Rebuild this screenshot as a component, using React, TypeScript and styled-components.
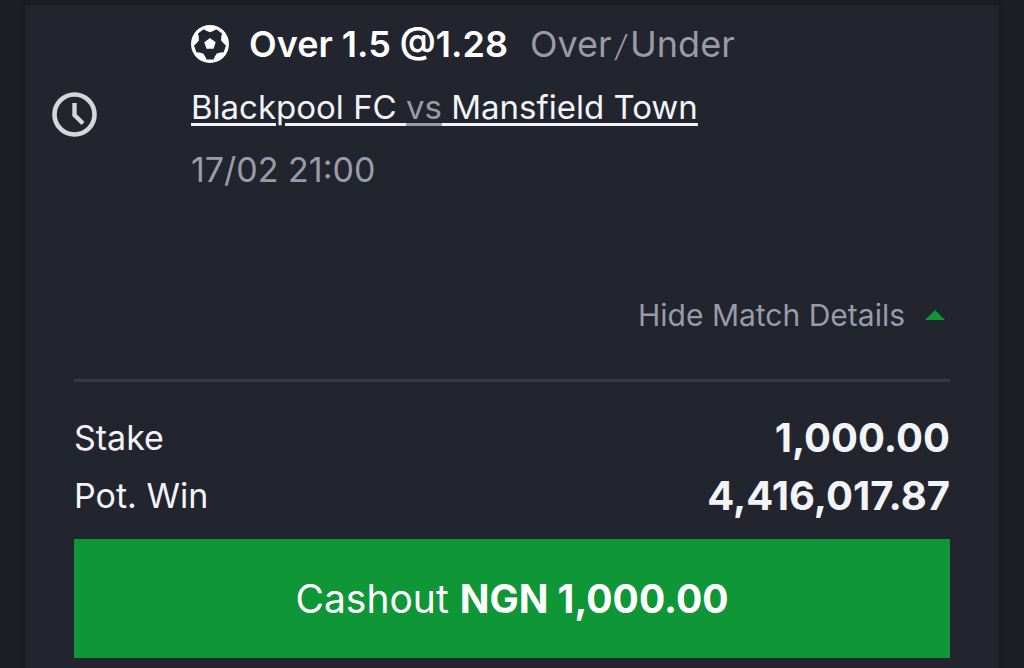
import React from "react";
import styled, { createGlobalStyle } from "styled-components";

const color = {
  page: "#1c1e26",
  card: "#22252e",
  line: "#353841",
  text: "#f3f4fa",
  muted: "#9a9ba9",
  green: "#0f9737",
};

const GlobalStyle = createGlobalStyle`
  *, *::before, *::after { box-sizing: border-box; }
  body {
    margin: 0;
    background: ${color.page};
    color: ${color.text};
    font-family: Inter, "Liberation Sans", sans-serif;
  }
`;

const Page = styled.main`
  display: flex;
  min-height: 100vh;
  padding: 5px 25px 0;
`;

const Card = styled.article`
  flex: 1;
  min-width: 0;
  padding-bottom: 10px;
  background: ${color.card};
  box-shadow: 0 0 4px rgba(0, 0, 0, 0.25);
`;

const Leg = styled.section`
  display: flex;
  align-items: center;
  gap: 94px;
  padding: 17px 49px 0 27px;
`;

const StatusIcon = styled.svg`
  flex: none;
  width: 45px;
  height: 45px;
`;

const LegBody = styled.div`
  display: flex;
  flex-direction: column;
  gap: 19px;
  padding-bottom: 14px;
  line-height: 44px;
`;

const PickRow = styled.div`
  display: flex;
  align-items: center;
  font-size: 36px;
`;

const BallIcon = styled.svg`
  flex: none;
  width: 38px;
  height: 38px;
  margin-right: 20px;
`;

const Pick = styled.strong`
  margin-right: 22px;
  color: #fff;
  font-weight: 600;
`;

const Muted = styled.span`
  color: ${color.muted};
`;

const Slash = styled.span`
  padding: 0 4px;
  font-size: 30px;
  font-style: italic;
  font-weight: 300;
  line-height: 1;
`;

const MatchLink = styled.a`
  color: ${color.text};
  font-size: 33px;
  text-decoration: underline;
  text-decoration-thickness: 3px;
  text-underline-offset: 4px;
`;

const Versus = styled(Muted)`
  text-decoration: underline;
  text-decoration-thickness: 3px;
  text-underline-offset: 4px;
`;

const Kickoff = styled.time`
  color: ${color.muted};
  font-size: 34px;
`;

const DetailsBar = styled.div`
  display: flex;
  justify-content: flex-end;
  margin: 0 49px;
  padding: 87px 5px 42px;
  border-bottom: 3px solid ${color.line};
`;

const ToggleButton = styled.button`
  display: flex;
  align-items: center;
  gap: 20px;
  padding: 0;
  border: 0;
  background: none;
  color: ${color.muted};
  font: inherit;
  font-size: 30px;
  line-height: 44px;
  cursor: pointer;
`;

const Caret = styled.svg`
  width: 20px;
  height: 10px;
`;

const Totals = styled.dl`
  margin: 0;
  padding: 27px 49px 14px;
`;

const TotalRow = styled.div`
  display: flex;
  align-items: center;
  justify-content: space-between;
  line-height: 58px;
`;

const TotalLabel = styled.dt`
  font-size: 34px;
`;

const TotalValue = styled.dd`
  margin: 0;
  font-size: 40px;
  font-weight: 700;
`;

const CashoutWrap = styled.div`
  padding: 0 49px;
`;

const CashoutButton = styled.button`
  display: block;
  width: 100%;
  padding: 36px 20px 35px;
  border: 0;
  background: ${color.green};
  color: #fff;
  font: inherit;
  font-size: 39px;
  line-height: 48px;
  cursor: pointer;
`;

const polar = (radius: number, degrees: number) => {
  const a = (degrees * Math.PI) / 180;
  return `${(radius * Math.cos(a)).toFixed(1)},${(-radius * Math.sin(a)).toFixed(1)}`;
};

const seams = [54, 126, 198, 270, 342]
  .flatMap((a) => [polar(48, a - 13), polar(48, a + 13), polar(41, a + 20), polar(35, a + 36), polar(41, a + 52)])
  .join(" ");

const pentagon = [90, 162, 234, 306, 18].map((a) => polar(18, a)).join(" ");

const Football = () => (
  <BallIcon viewBox="-57 -57 114 114" role="img" aria-label="Football">
    <circle r="57" fill="#fff" />
    <polygon points={seams} fill={color.card} />
    <polygon points={pentagon} fill="#fff" />
  </BallIcon>
);

const Clock = () => (
  <StatusIcon viewBox="0 0 45 45" role="img" aria-label="Not started" fill="none" stroke="#d5d6dd">
    <circle cx="22.5" cy="22.5" r="20" strokeWidth="4.6" />
    <path d="M22.5 11v12l8.5 8.5" strokeWidth="4.4" />
  </StatusIcon>
);

const totals = [
  { label: "Stake", value: "1,000.00" },
  { label: "Pot. Win", value: "4,416,017.87" },
];

export default function App() {
  return (
    <>
      <GlobalStyle />
      <Page>
        <Card>
          <Leg>
            <Clock />
            <LegBody>
              <PickRow>
                <Football />
                <Pick>Over 1.5 @1.28</Pick>
                <Muted>
                  Over<Slash>/</Slash>Under
                </Muted>
              </PickRow>
              <MatchLink href="#match">
                Blackpool FC <Versus>vs</Versus> Mansfield Town
              </MatchLink>
              <Kickoff>17/02 21:00</Kickoff>
            </LegBody>
          </Leg>
          <DetailsBar>
            <ToggleButton type="button" aria-expanded="true">
              Hide Match Details
              <Caret viewBox="0 0 20 10" aria-hidden="true">
                <path d="M0 10 10 0l10 10z" fill={color.green} />
              </Caret>
            </ToggleButton>
          </DetailsBar>
          <Totals>
            {totals.map((t) => (
              <TotalRow key={t.label}>
                <TotalLabel>{t.label}</TotalLabel>
                <TotalValue>{t.value}</TotalValue>
              </TotalRow>
            ))}
          </Totals>
          <CashoutWrap>
            <CashoutButton type="button">
              Cashout <strong>NGN 1,000.00</strong>
            </CashoutButton>
          </CashoutWrap>
        </Card>
      </Page>
    </>
  );
}
